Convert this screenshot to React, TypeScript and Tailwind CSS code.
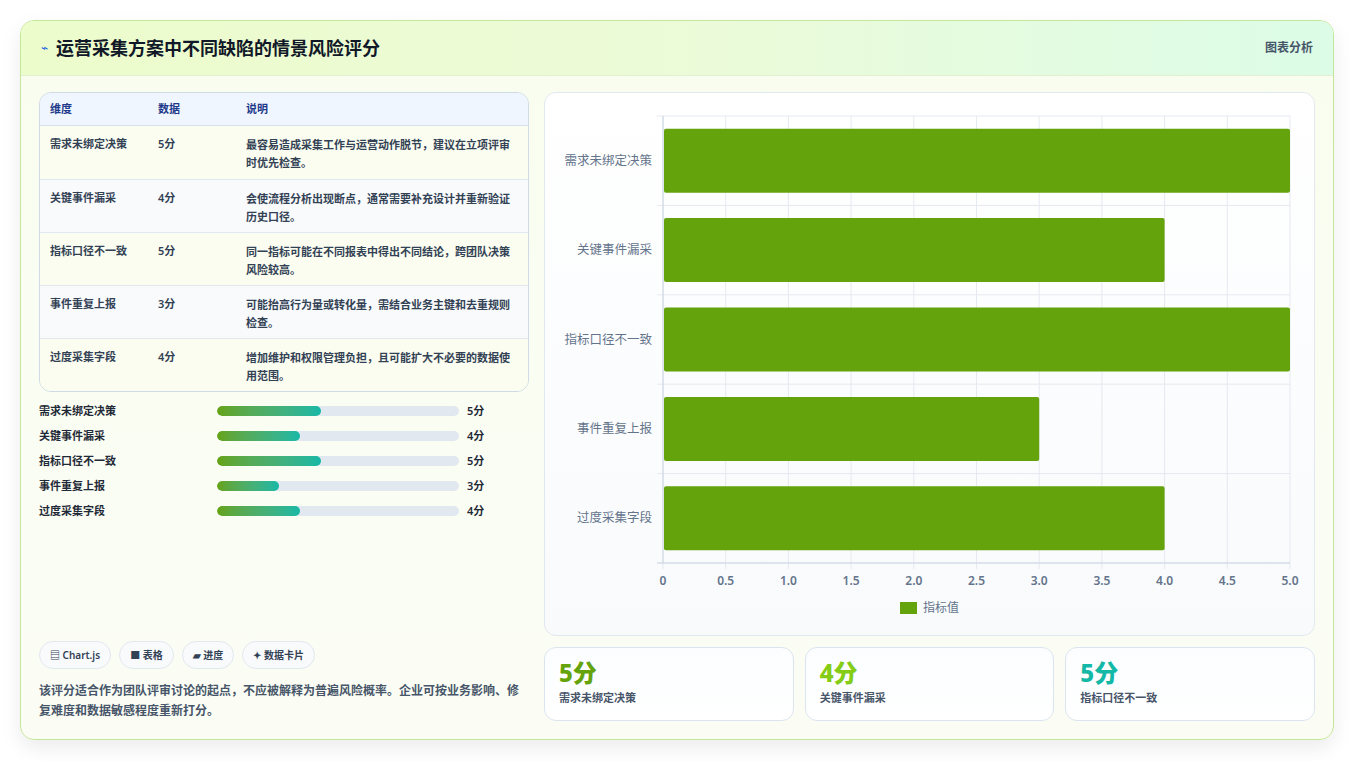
const rows = [
  { name: "需求未绑定决策", v: 5, desc: "最容易造成采集工作与运营动作脱节，建议在立项评审时优先检查。" },
  { name: "关键事件漏采", v: 4, desc: "会使流程分析出现断点，通常需要补充设计并重新验证历史口径。" },
  { name: "指标口径不一致", v: 5, desc: "同一指标可能在不同报表中得出不同结论，跨团队决策风险较高。" },
  { name: "事件重复上报", v: 3, desc: "可能抬高行为量或转化量，需结合业务主键和去重规则检查。" },
  { name: "过度采集字段", v: 4, desc: "增加维护和权限管理负担，且可能扩大不必要的数据使用范围。" },
];

const Chart = () => {
  const L = 118, R = 745, T = 23, B = 470;
  const rowH = (B - T) / 5;
  const x = (v: number) => L + ((R - L) * v) / 5;
  return (
    <svg width="769" height="544" className="block">
      {Array.from({ length: 11 }).map((_, i) => (
        <line key={i} x1={x(i * 0.5)} x2={x(i * 0.5)} y1={T} y2={B + 6} stroke="#e5e9f0" />
      ))}
      {Array.from({ length: 6 }).map((_, i) => (
        <line key={i} x1={L - 6} x2={R} y1={T + i * rowH} y2={T + i * rowH} stroke="#e5e9f0" />
      ))}
      <line x1={L} x2={L} y1={T} y2={B} stroke="#cbd5e1" />
      <line x1={L - 6} x2={R} y1={B} y2={B} stroke="#cbd5e1" />
      {rows.map((r, i) => {
        const cy = T + rowH * i + rowH / 2;
        return (
          <g key={r.name}>
            <rect x={L + 1} y={cy - 32} width={x(r.v) - L - 1} height={64} rx={2} fill="#65a30d" />
            <text x={107} y={cy + 4} textAnchor="end" fontSize="12.5" fill="#64748b">{r.name}</text>
          </g>
        );
      })}
      {Array.from({ length: 11 }).map((_, i) => (
        <text key={i} x={x(i * 0.5)} y={492} textAnchor="middle" fontSize="12" fontWeight="600" fill="#64748b">
          {i === 0 ? "0" : (i * 0.5).toFixed(1)}
        </text>
      ))}
      <rect x={355} y={509} width={17} height={12} fill="#65a30d" />
      <text x={378} y={519} fontSize="12" fill="#64748b">指标值</text>
    </svg>
  );
};

export default function App() {
  return (
    <div className="w-[1354px] h-[761px] bg-white p-5" style={{ fontFamily: '"Noto Sans", "Noto Sans CJK SC", sans-serif' }}>
      <div className="h-[720px] rounded-[14px] border border-[#c5e79a] overflow-hidden flex flex-col bg-gradient-to-b from-[#f9fdef] to-[#fbfdf5] shadow-[0_8px_20px_rgba(0,0,0,0.08)]">
        <div className="h-[55px] shrink-0 flex items-center justify-between px-5 border-b border-[#e3f0d0] bg-gradient-to-r from-[#ecfccb] via-[#ecfbd8] to-[#dcfce7]">
          <div className="flex items-center gap-2">
            <span className="text-[#2563eb] text-xs">⌁</span>
            <span className="text-[18px] font-bold text-[#111827]">运营采集方案中不同缺陷的情景风险评分</span>
          </div>
          <span className="text-xs font-semibold text-[#475569]">图表分析</span>
        </div>
        <div className="flex-1 flex gap-[15px] px-[18px] pt-[16px] pb-[18px]">
          <div className="w-[491px] flex flex-col">
            <div className="rounded-xl border border-[#cfdbe6] overflow-hidden text-[11px] text-[#334155]">
              <div className="flex h-[33px] items-center bg-[#eff6ff] text-[#1e3a8a] font-semibold border-b border-[#d8e2ec]">
                <div className="w-[118px] pl-[10px]">维度</div>
                <div className="w-[88px]">数据</div>
                <div className="flex-1">说明</div>
              </div>
              {rows.map((r, i) => (
                <div key={r.name} className={`flex h-[53px] pt-[10px] font-semibold ${i > 0 ? "border-t border-[#e2e8f0]" : ""} ${i % 2 ? "bg-[#f8fafc]" : "bg-[#fafdf0]"}`}>
                  <div className="w-[118px] pl-[10px]">{r.name}</div>
                  <div className="w-[88px]">{r.v}分</div>
                  <div className="flex-1 pr-[10px] leading-[18px]">{r.desc}</div>
                </div>
              ))}
            </div>
            <div className="mt-[11px] flex flex-col gap-[9px] text-[11px] font-semibold text-[#1f2937]">
              {rows.map((r) => (
                <div key={r.name} className="flex items-center h-[16px]">
                  <div className="w-[178px]">{r.name}</div>
                  <div className="w-[242px] h-[10px] rounded-full bg-[#e2e8f0] overflow-hidden">
                    <div className="h-full rounded-full bg-gradient-to-r from-[#65a30d] to-[#14b8a6]" style={{ width: `${(r.v / 5) * 43}%` }} />
                  </div>
                  <div className="ml-2">{r.v}分</div>
                </div>
              ))}
            </div>
            <div className="mt-auto flex gap-2 text-[10px] font-semibold text-[#334155]">
              {["▤ Chart.js", "■ 表格", "▰ 进度", "✦ 数据卡片"].map((c) => (
                <span key={c} className="h-[28px] px-[10px] flex items-center rounded-full border border-[#e2e8f0] bg-[#f8fafc]">{c}</span>
              ))}
            </div>
            <p className="mt-[12px] text-[12px] leading-[20px] font-semibold text-[#475569]">
              该评分适合作为团队评审讨论的起点，不应被解释为普遍风险概率。企业可按业务影响、修复难度和数据敏感程度重新打分。
            </p>
          </div>
          <div className="flex-1 flex flex-col gap-[11px]">
            <div className="h-[544px] rounded-xl border border-[#e2e8f0] bg-gradient-to-b from-white to-[#f8fafc] overflow-hidden">
              <Chart />
            </div>
            <div className="flex gap-[11px]">
              {[
                { v: "5分", c: "text-[#65a30d]", n: "需求未绑定决策" },
                { v: "4分", c: "text-[#84cc16]", n: "关键事件漏采" },
                { v: "5分", c: "text-[#14b8a6]", n: "指标口径不一致" },
              ].map((k) => (
                <div key={k.n} className="flex-1 h-[74px] rounded-xl border border-[#dbe5f0] bg-gradient-to-b from-[#fbfdff] to-white px-[14px] pt-[10px]">
                  <div className={`text-[24px] font-extrabold leading-[30px] ${k.c}`}>{k.v}</div>
                  <div className="text-[11px] font-semibold text-[#475569] mt-[2px]">{k.n}</div>
                </div>
              ))}
            </div>
          </div>
        </div>
      </div>
    </div>
  );
}
